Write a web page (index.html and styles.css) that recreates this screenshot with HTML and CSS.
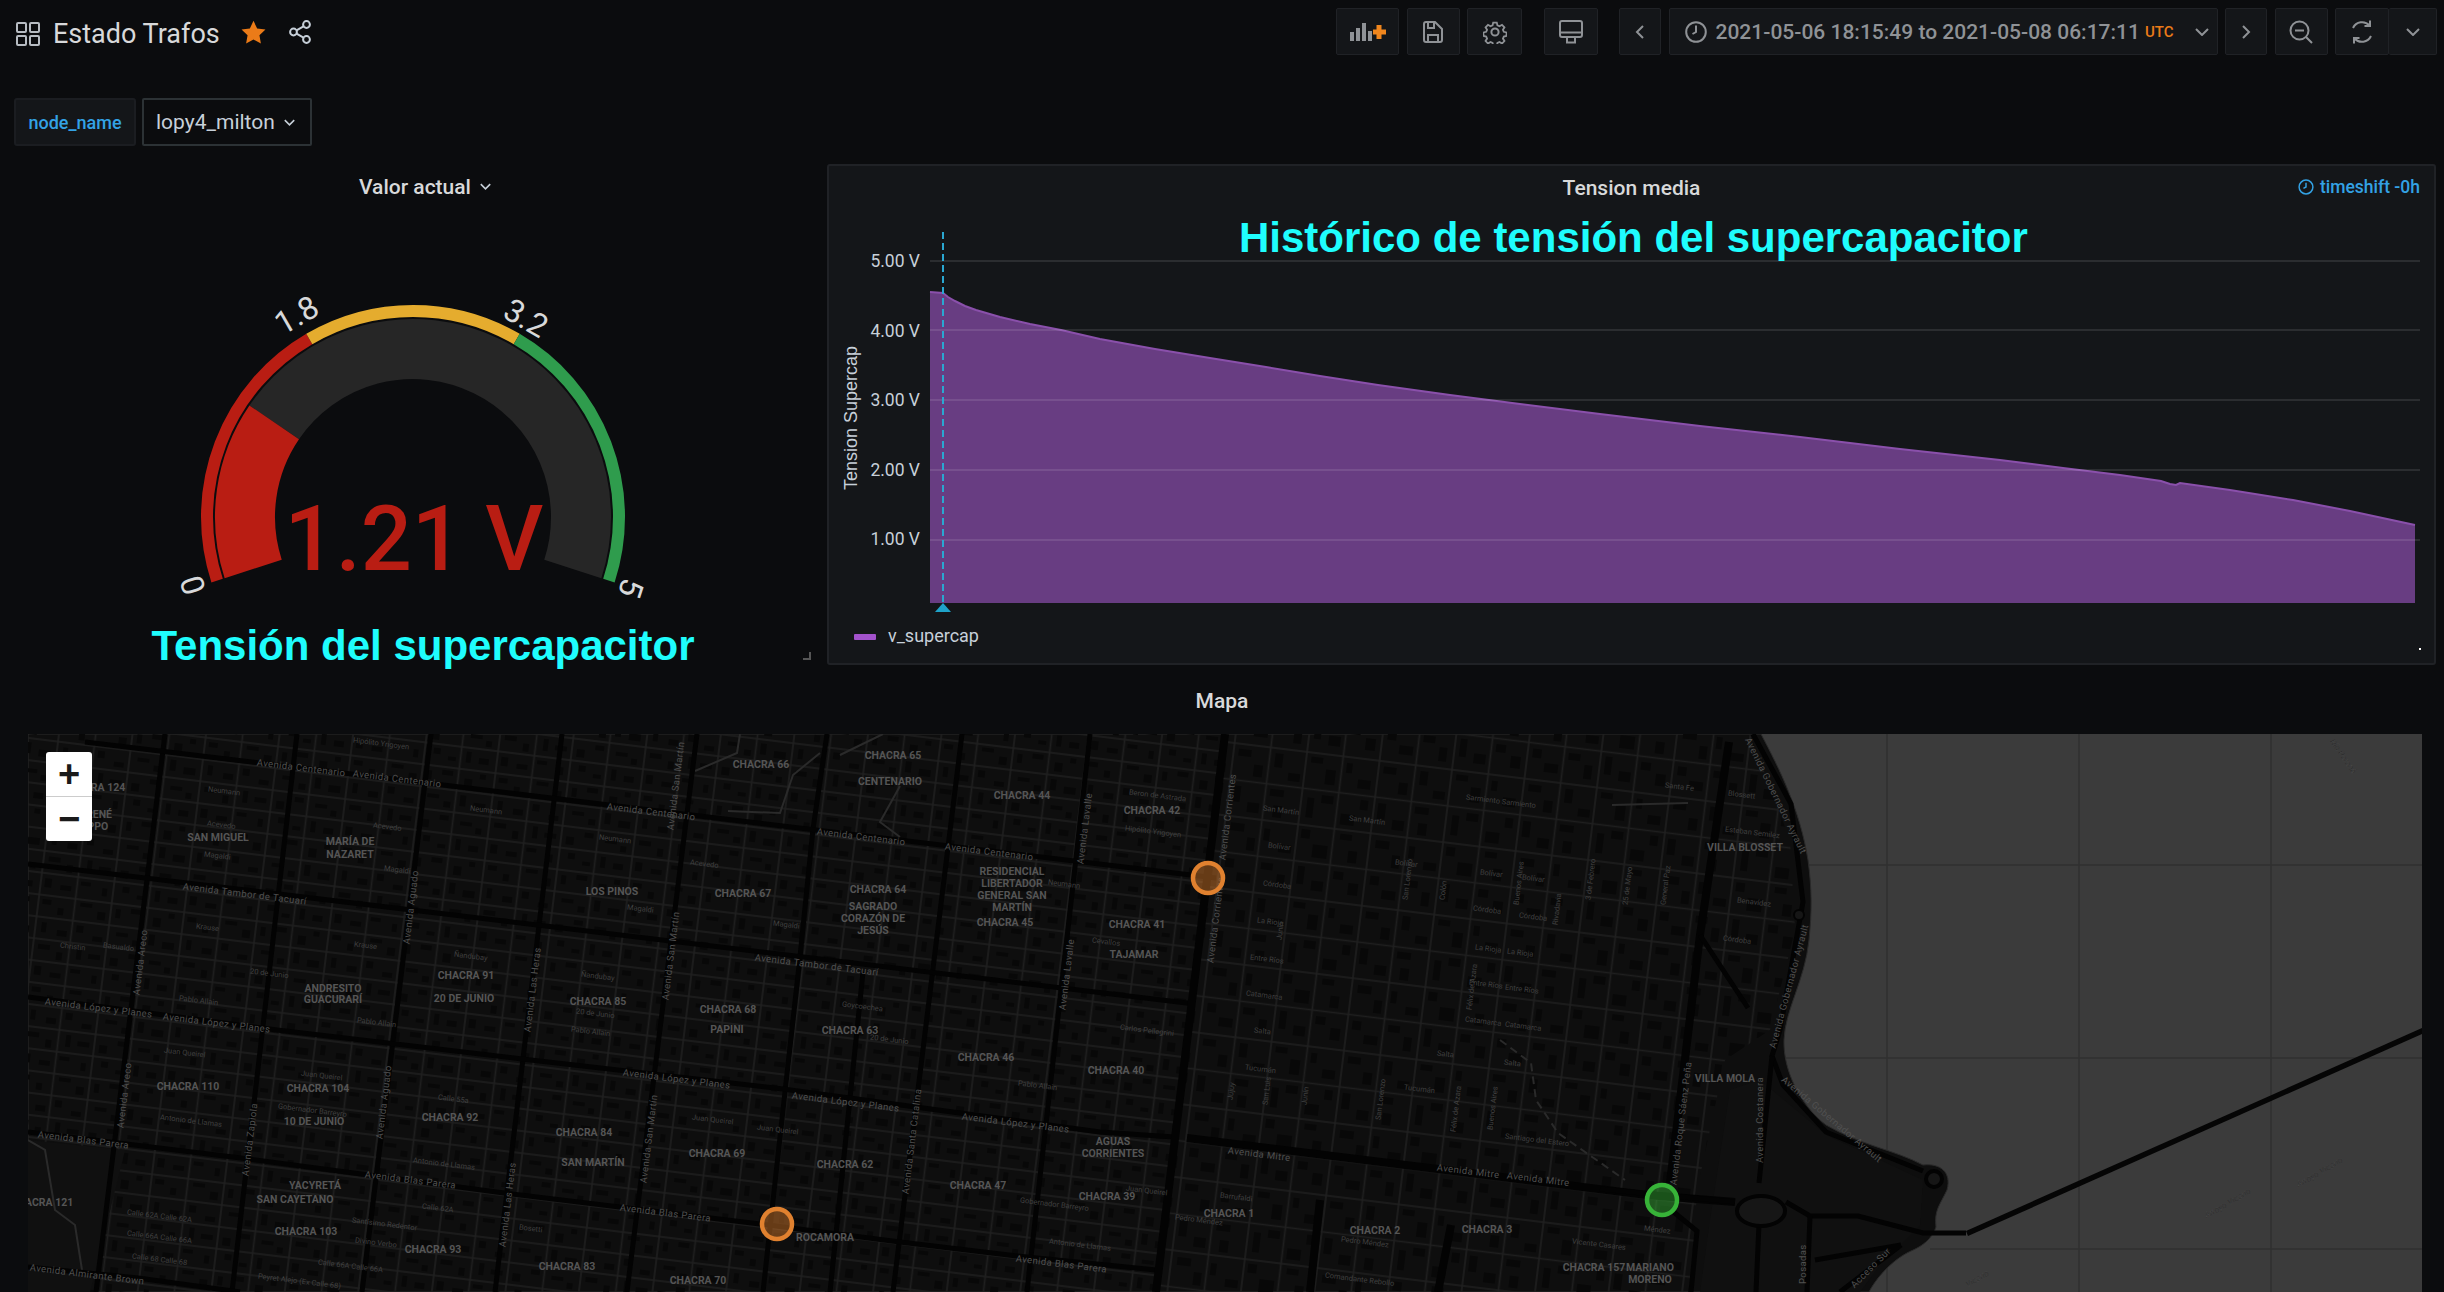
FILE: index.html
```html
<!DOCTYPE html>
<html lang="es">
  <head>
    <meta charset="UTF-8" />
    <title>Estado Trafos</title>
    <link rel="stylesheet" href="styles.css">
  </head>
  <body>
    <header class="topbar">
      <div class="dash-title">
        <svg class="ico-apps" viewBox="0 0 24 24"><rect x="1" y="1" width="9" height="9" rx="1"/><rect x="14" y="1" width="9" height="9" rx="1"/><rect x="1" y="14" width="9" height="9" rx="1"/><rect x="14" y="14" width="9" height="9" rx="1"/></svg>
        <h1>Estado Trafos</h1>
        <svg class="ico-star" viewBox="0 0 24 24"><path d="M12 .8l3.5 7.3 8 1.1-5.8 5.5 1.4 7.9-7.1-3.8-7.1 3.8 1.4-7.9L.5 9.2l8-1.1z"/></svg>
        <svg class="ico-share" viewBox="0 0 22 24"><circle cx="17.5" cy="4.5" r="3.4"/><circle cx="4.5" cy="12" r="3.4"/><circle cx="17.5" cy="19.5" r="3.4"/><path d="M7.5 10.3l7-4M7.5 13.7l7 4"/></svg>
      </div>
      <div class="toolbar">
        <button class="btn w63"><svg width="36" height="18" viewBox="0 0 36 18"><path class="solid" d="M0 9h4v9H0zM6 5h4v13H6zM12 0h4v18h-4zM18 8h4v10h-4z"/><path class="plus" d="M29 2v14M23 9h13"/></svg></button>
        <button class="btn w53"><svg width="20" height="22" viewBox="0 0 20 22"><path d="M3 1h9l7 7v11a2 2 0 0 1-2 2H3a2 2 0 0 1-2-2V3a2 2 0 0 1 2-2z"/><path d="M5 1v6h6V1M5 21v-7h10v7"/></svg></button>
        <button class="btn w55"><svg width="24" height="24" viewBox="0 0 24 24"><circle cx="12" cy="12" r="3.6"/><path d="M10 1.500h4l.7 3.200 2.300 1 2.800-1.700 2.700 2.800-1.700 2.700 1 2.300 3 .7v3.800l-3 .7-1 2.300 1.700 2.700-2.700 2.800-2.800-1.700-2.300 1-.7 3h-4l-.7-3-2.300-1-2.800 1.700-2.700-2.800 1.700-2.700-1-2.300-3-.7v-3.800l3-.7 1-2.300-1.700-2.700 2.700-2.800 2.800 1.700 2.300-1z" transform="translate(1.200 1.200) scale(.9)"/></svg></button>
        <button class="btn w54 gap-left"><svg width="24" height="24" viewBox="0 0 24 24"><rect x="1" y="1" width="22" height="16" rx="2"/><path d="M1 12.500h22M8 17v5.500h8V17"/></svg></button>
        <button class="btn w42 gap-left"><svg width="10" height="14" viewBox="0 0 10 14"><path d="M8 1L2 7l6 6"/></svg></button>
        <button class="btn time-range">
          <svg width="22" height="22" viewBox="0 0 22 22"><circle cx="11" cy="11" r="9.800"/><path d="M11 4.500V11l-3.500 2"/></svg>
          <span class="time-text">2021-05-06 18:15:49 to 2021-05-08 06:17:11</span>
          <span class="utc">UTC</span>
          <svg class="caret" width="14" height="8" viewBox="0 0 14 8"><path d="M1 1l6 6 6-6"/></svg>
        </button>
        <button class="btn w42"><svg width="10" height="14" viewBox="0 0 10 14"><path d="M2 1l6 6-6 6"/></svg></button>
        <button class="btn w53"><svg width="24" height="24" viewBox="0 0 24 24"><circle cx="10.500" cy="10.500" r="9"/><path d="M6 10.500h9M17 17l6 6"/></svg></button>
        <div class="btn-pair">
          <button class="btn w54"><svg width="24" height="26" viewBox="0 0 24 26"><path d="M19.500 6.500A10 10 0 0 0 3 9M4.500 19.500A10 10 0 0 0 21 17M20 1.500v5.500h-5.500M4 24.500V19h5.500"/></svg></button>
          <button class="btn w48"><svg width="14" height="8" viewBox="0 0 14 8"><path d="M1 1l6 6 6-6"/></svg></button>
        </div>
      </div>
    </header>

    <section class="var-row">
      <span class="var-label">node_name</span>
      <span class="var-select">lopy4_milton <svg width="11" height="7" viewBox="0 0 14 8"><path d="M1 1l6 6 6-6"/></svg></span>
    </section>

    <section class="panels">
      <article class="panel-gauge">
        <h2 class="panel-title">Valor actual <svg width="11" height="7" viewBox="0 0 14 8"><path d="M1 1l6 6 6-6"/></svg></h2>
        <svg class="gauge" viewBox="28 209 780 414">
          <path class="band" stroke="#b91d13" d="M217.100 580.700A206 206 0 0 1 309.300 339"/>
          <path class="band" stroke="#e5ac2e" d="M309.300 339A206 206 0 0 1 516.700 339"/>
          <path class="band" stroke="#2f9c4d" d="M516.700 339A206 206 0 0 1 608.900 580.700"/>
          <path class="val" stroke="#262626" d="M274.200 422.400A168 168 0 0 1 572.800 568.900"/>
          <path class="val" stroke="#b91d13" d="M253.200 568.900A168 168 0 0 1 274.200 422.400"/>
          <text class="tick" transform="translate(193 585) rotate(-108)">0</text>
          <text class="tick" transform="translate(296.500 315) rotate(-30)">1.8</text>
          <text class="tick" transform="translate(526 318) rotate(30)">3.2</text>
          <text class="tick" transform="translate(631 588) rotate(108)">5</text>
          <text class="gauge-value" x="414" y="570">1.21 V</text>
        </svg>
        <p class="note note-gauge">Tensión del supercapacitor</p>
        <span class="resize-handle"></span>
      </article>

      <article class="panel-graph">
        <h2 class="panel-title">Tension media</h2>
        <span class="timeshift"><svg width="16" height="16" viewBox="0 0 22 22"><circle cx="11" cy="11" r="9.500"/><path d="M11 5v6l-3.500 2"/></svg> timeshift -0h</span>
        <p class="note note-graph">Histórico de tensión del supercapacitor</p>
        <svg class="plot" viewBox="829 209 1605 411">
          <polygon class="area" points="930,603 930,292 943,293 948,297 955,301 965,306 976,310 1000,317 1030,324 1061,330 1100,339 1155,349 1210,358 1266,367 1320,376 1378,385 1450,395 1520,404 1600,414 1700,426 1800,437 1900,449 2000,460 2063,468 2120,475 2161,481 2170,484 2176,485 2180,483 2230,490 2293,500 2350,511 2415,525 2415,603"/>
          <polyline class="area-line" points="930,292 943,293 948,297 955,301 965,306 976,310 1000,317 1030,324 1061,330 1100,339 1155,349 1210,358 1266,367 1320,376 1378,385 1450,395 1520,404 1600,414 1700,426 1800,437 1900,449 2000,460 2063,468 2120,475 2161,481 2170,484 2176,485 2180,483 2230,490 2293,500 2350,511 2415,525"/>
          <path class="grid" d="M930 261H2420M930 330H2420M930 400H2420M930 470H2420M930 540H2420"/>
          <path class="marker" d="M943 232V603"/>
          <polygon class="marker-tip" points="943,603 935,612 951,612"/>
          <text class="ylab" x="920" y="261">5.00 V</text>
          <text class="ylab" x="920" y="331">4.00 V</text>
          <text class="ylab" x="920" y="400">3.00 V</text>
          <text class="ylab" x="920" y="470">2.00 V</text>
          <text class="ylab" x="920" y="539">1.00 V</text>
          <text class="yaxis" transform="translate(851 418) rotate(-90)">Tension Supercap</text>
        </svg>
        <div class="legend"><i class="legend-swatch"></i>v_supercap</div>
        <i class="dot"></i>
      </article>
    </section>

    <h2 class="panel-title map-title">Mapa</h2>
    <section class="map">
      <svg class="map-svg" viewBox="28 734 2394 558" preserveAspectRatio="xMinYMin slice">
        <defs>
          <pattern id="blocks-west" patternUnits="userSpaceOnUse" width="146" height="88" patternTransform="rotate(7)">
            <path class="tile-st" d="M2 0V88M38.500 0V88M75 0V88M111.500 0V88M0 3H146M0 25H146M0 47H146M0 69H146"/>
            <g class="tile-bd">
              <rect x="6" y="7" width="9" height="5"/><rect x="22" y="14" width="6" height="7"/><rect x="44" y="6" width="12" height="4"/><rect x="62" y="13" width="8" height="8"/>
              <rect x="80" y="8" width="5" height="9"/><rect x="95" y="6" width="11" height="5"/><rect x="118" y="12" width="8" height="9"/><rect x="133" y="6" width="6" height="5"/>
              <rect x="8" y="30" width="5" height="10"/><rect x="24" y="36" width="10" height="6"/><rect x="43" y="29" width="7" height="7"/><rect x="60" y="38" width="10" height="5"/>
              <rect x="83" y="31" width="12" height="4"/><rect x="100" y="37" width="7" height="6"/><rect x="116" y="29" width="6" height="11"/><rect x="130" y="35" width="12" height="7"/>
              <rect x="7" y="52" width="12" height="5"/><rect x="26" y="58" width="6" height="8"/><rect x="46" y="51" width="5" height="12"/><rect x="58" y="56" width="12" height="5"/>
              <rect x="80" y="57" width="8" height="8"/><rect x="98" y="51" width="9" height="5"/><rect x="119" y="55" width="12" height="4"/><rect x="135" y="60" width="6" height="6"/>
              <rect x="6" y="74" width="7" height="9"/><rect x="22" y="79" width="11" height="5"/><rect x="42" y="73" width="10" height="4"/><rect x="64" y="77" width="5" height="8"/>
              <rect x="84" y="73" width="7" height="6"/><rect x="99" y="80" width="8" height="4"/><rect x="117" y="73" width="5" height="11"/><rect x="130" y="78" width="10" height="6"/>
            </g>
          </pattern>
          <pattern id="blocks-east" patternUnits="userSpaceOnUse" width="146" height="146" patternTransform="rotate(7)">
            <path class="tile-st" d="M2 0V146M38.500 0V146M75 0V146M111.500 0V146M0 3H146M0 39.500H146M0 76H146M0 112.500H146"/>
            <g class="tile-bd">
              <rect x="7" y="8" width="13" height="7"/><rect x="24" y="22" width="9" height="12"/><rect x="44" y="8" width="8" height="14"/><rect x="59" y="26" width="12" height="8"/>
              <rect x="80" y="7" width="12" height="6"/><rect x="96" y="18" width="10" height="15"/><rect x="116" y="9" width="6" height="10"/><rect x="129" y="24" width="13" height="9"/>
              <rect x="6" y="45" width="8" height="16"/><rect x="22" y="60" width="12" height="10"/><rect x="43" y="44" width="14" height="7"/><rect x="48" y="60" width="9" height="12"/>
              <rect x="81" y="48" width="7" height="20"/><rect x="95" y="44" width="12" height="8"/><rect x="116" y="60" width="14" height="11"/><rect x="134" y="44" width="8" height="10"/>
              <rect x="8" y="82" width="14" height="8"/><rect x="26" y="95" width="8" height="13"/><rect x="42" y="84" width="6" height="12"/><rect x="58" y="98" width="13" height="8"/>
              <rect x="79" y="80" width="9" height="9"/><rect x="92" y="94" width="15" height="13"/><rect x="118" y="80" width="12" height="6"/><rect x="128" y="96" width="9" height="12"/>
              <rect x="7" y="118" width="9" height="9"/><rect x="20" y="131" width="14" height="9"/><rect x="43" y="118" width="12" height="7"/><rect x="60" y="128" width="8" height="14"/>
              <rect x="80" y="117" width="7" height="18"/><rect x="95" y="130" width="12" height="10"/><rect x="116" y="118" width="10" height="8"/><rect x="132" y="128" width="10" height="12"/>
            </g>
          </pattern>
        </defs>

        <!-- rio -->
        <rect class="water" x="28" y="734" width="2394" height="558"/>
        <path class="water-grid" d="M1887 734V1292M2079 734V1292M2271 734V1292M1804 865H2422M1786 1058H2422M1930 1249H2422"/>
        <polygon class="road-major" points="1966,1231 2422,1028 2422,1034 1968,1236"/>

        <!-- tierra -->
        <path class="land" d="M28 734H1761C1780 770 1800 810 1808 860C1812 890 1812 910 1809 940C1805 980 1785 1010 1784 1040C1783 1070 1800 1105 1826 1125C1860 1145 1895 1150 1923 1165C1940 1163 1952 1172 1947 1190C1940 1205 1934 1210 1936 1227C1930 1245 1912 1250 1907 1253C1890 1262 1875 1280 1869 1292H28Z"/>
        <polygon fill="url(#blocks-west)" points="28,734 1225,734 1156,1292 28,1292"/>
        <polygon fill="url(#blocks-east)" points="1225,734 1750,734 1790,840 1795,930 1770,1030 1725,1060 1697,1190 1691,1292 1156,1292"/>
        <polygon class="park" points="28,1140 125,1150 90,1292 28,1292"/>
        <polygon class="park" points="1760,1080 1826,1135 1923,1180 1920,1225 1880,1265 1860,1292 1700,1292 1710,1220 1730,1090"/>
        <path class="road-pale" d="M28 1140L45 1150L55 1210L75 1225L82 1270M695 771L737 753L740 734M728 811L780 813L793 775L820 753M840 755L883 734M900 786L880 822L900 837M1612 805L1688 803"/>
        <path class="road-pale dashed" d="M1500 1040L1531 1063L1536 1100L1558 1133L1625 1180"/>

        <!-- avenidas -->
        <g class="road-major">
          <path d="M165 734L96 1292M297 734L232 1292M431 734L362 1292M562 734L495 1292M697 734L627 1292"/>
          <path d="M827 734L813 829L800 957L785 1092L763 1292M863 972L830 1292M962 734L893 1292M1090 734L1027 1292"/>
          <path d="M85 742L1216 878M28 864L1195 1004M28 997L277 1030L522 1059L783 1089L1100 1132L1174 1137"/>
          <path d="M28 1132L241 1158L504 1193L760 1224L900 1242L1017 1256L1156 1270M28 1267L138 1278L240 1292"/>
        </g>
        <g class="road-wide">
          <path d="M1225 734L1156 1292"/>
          <path d="M1187 1138L1446 1170L1647 1195L1735 1202"/>
          <path d="M1729 742L1700 935L1670 1183"/>
          <path d="M1451 1225L1438 1292M1320 1200L1310 1292"/>
        </g>
        <g class="road-coast">
          <path d="M1753 734L1791 804L1803 902L1780 1030L1772 1056L1783 1085L1826 1132L1923 1171"/>
          <path d="M1700 935L1748 1008M1772 1056L1759 1183M1670 1209L1697 1231L1691 1292M1786 1202L1810 1216L1858 1216L1923 1233L1966 1233"/>
          <path d="M1810 1216L1807 1292M1759 1224L1756 1292M1815 1260L1901 1245M1840 1292L1901 1245"/>
          <path d="M1600 1189L1735 1202"/>
        </g>
        <ellipse class="road-ring" cx="1761" cy="1211" rx="24" ry="15"/>
        <circle class="road-ring" cx="1934" cy="1179" r="8"/>
        <circle class="road-ring thin" cx="1799" cy="915" r="5"/>

        <!-- barrios -->
        <g class="dist">
          <text x="94" y="787">CHACRA 124</text><text x="99" y="814">RENÉ</text><text x="89" y="826">FILIPPO</text>
          <text x="218" y="837">SAN MIGUEL</text><text x="350" y="841">MARÍA DE</text><text x="350" y="854">NAZARET</text><text x="612" y="891">LOS PINOS</text>
          <text x="466" y="975">CHACRA 91</text><text x="464" y="998">20 DE JUNIO</text><text x="333" y="988">ANDRESITO</text><text x="333" y="999">GUACURARÍ</text><text x="598" y="1001">CHACRA 85</text>
          <text x="188" y="1086">CHACRA 110</text><text x="318" y="1088">CHACRA 104</text><text x="314" y="1121">10 DE JUNIO</text><text x="450" y="1117">CHACRA 92</text><text x="584" y="1132">CHACRA 84</text><text x="593" y="1162">SAN MARTÍN</text>
          <text x="315" y="1185">YACYRETÁ</text><text x="295" y="1199">SAN CAYETANO</text><text x="42" y="1202">CHACRA 121</text><text x="306" y="1231">CHACRA 103</text><text x="433" y="1249">CHACRA 93</text><text x="567" y="1266">CHACRA 83</text><text x="698" y="1280">CHACRA 70</text>
          <text x="761" y="764">CHACRA 66</text><text x="893" y="755">CHACRA 65</text><text x="890" y="781">CENTENARIO</text><text x="1022" y="795">CHACRA 44</text><text x="743" y="893">CHACRA 67</text><text x="878" y="889">CHACRA 64</text>
          <text x="873" y="906">SAGRADO</text><text x="873" y="918">CORAZÓN DE</text><text x="873" y="930">JESÚS</text>
          <text x="1012" y="871">RESIDENCIAL</text><text x="1012" y="883">LIBERTADOR</text><text x="1012" y="895">GENERAL SAN</text><text x="1012" y="907">MARTÍN</text><text x="1005" y="922">CHACRA 45</text>
          <text x="728" y="1009">CHACRA 68</text><text x="727" y="1029">PAPINI</text><text x="850" y="1030">CHACRA 63</text><text x="986" y="1057">CHACRA 46</text><text x="717" y="1153">CHACRA 69</text><text x="845" y="1164">CHACRA 62</text><text x="978" y="1185">CHACRA 47</text><text x="825" y="1237">ROCAMORA</text>
          <text x="1152" y="810">CHACRA 42</text><text x="1137" y="924">CHACRA 41</text><text x="1134" y="954">TAJAMAR</text><text x="1116" y="1070">CHACRA 40</text><text x="1113" y="1141">AGUAS</text><text x="1113" y="1153">CORRIENTES</text><text x="1107" y="1196">CHACRA 39</text>
          <text x="1229" y="1213">CHACRA 1</text><text x="1375" y="1230">CHACRA 2</text><text x="1487" y="1229">CHACRA 3</text><text x="1594" y="1267">CHACRA 157</text><text x="1650" y="1267">MARIANO</text><text x="1650" y="1279">MORENO</text>
          <text x="1745" y="847">VILLA BLOSSET</text><text x="1725" y="1078">VILLA MOLA</text>
        </g>

        <!-- avenidas, nombres -->
        <g class="ave">
          <text transform="translate(257 762) rotate(7)">Avenida Centenario</text><text transform="translate(353 773) rotate(7)">Avenida Centenario</text><text transform="translate(607 806) rotate(7)">Avenida Centenario</text><text transform="translate(817 831) rotate(7)">Avenida Centenario</text><text transform="translate(945 846) rotate(7)">Avenida Centenario</text>
          <text transform="translate(183 886) rotate(7)">Avenida Tambor de Tacuarí</text><text transform="translate(755 957) rotate(7)">Avenida Tambor de Tacuarí</text>
          <text transform="translate(45 1001) rotate(7)">Avenida López y Planes</text><text transform="translate(163 1016) rotate(7)">Avenida López y Planes</text><text transform="translate(623 1072) rotate(7)">Avenida López y Planes</text><text transform="translate(792 1095) rotate(7)">Avenida López y Planes</text><text transform="translate(962 1116) rotate(7)">Avenida López y Planes</text>
          <text transform="translate(38 1134) rotate(7)">Avenida Blas Parera</text><text transform="translate(365 1174) rotate(7)">Avenida Blas Parera</text><text transform="translate(620 1207) rotate(7)">Avenida Blas Parera</text><text transform="translate(1016 1258) rotate(7)">Avenida Blas Parera</text>
          <text transform="translate(30 1267) rotate(7)">Avenida Almirante Brown</text>
          <text transform="translate(1228 1150) rotate(7)">Avenida Mitre</text><text transform="translate(1437 1167) rotate(7)">Avenida Mitre</text><text transform="translate(1507 1175) rotate(7)">Avenida Mitre</text>
          <text transform="translate(136 995) rotate(-83)">Avenida Areco</text><text transform="translate(120 1128) rotate(-83)">Avenida Areco</text>
          <text transform="translate(406 944) rotate(-83)">Avenida Aguado</text><text transform="translate(379 1139) rotate(-83)">Avenida Aguado</text>
          <text transform="translate(245 1176) rotate(-83)">Avenida Zapiola</text>
          <text transform="translate(527 1032) rotate(-83)">Avenida Las Heras</text><text transform="translate(502 1247) rotate(-83)">Avenida Las Heras</text>
          <text transform="translate(665 1000) rotate(-83)">Avenida San Martín</text><text transform="translate(643 1183) rotate(-83)">Avenida San Martín</text><text transform="translate(670 830) rotate(-83)">Avenida San Martín</text>
          <text transform="translate(905 1194) rotate(-83)">Avenida Santa Catalina</text>
          <text transform="translate(1080 864) rotate(-83)">Avenida Lavalle</text><text transform="translate(1062 1010) rotate(-83)">Avenida Lavalle</text>
          <text transform="translate(1210 963) rotate(-83)">Avenida Corrientes</text><text transform="translate(1222 860) rotate(-83)">Avenida Corrientes</text>
          <text transform="translate(1673 1185) rotate(-83)">Avenida Roque Sáenz Peña</text>
          <text transform="translate(1748 738) rotate(64)">Avenida Gobernador Ayrault</text>
          <text transform="translate(1772 1048) rotate(-75)">Avenida Gobernador Ayrault</text>
          <text transform="translate(1783 1078) rotate(40)">Avenida Gobernador Ayrault</text>
          <text transform="translate(1759 1163) rotate(-90)">Avenida Costanera</text>
          <text transform="translate(1802 1284) rotate(-90)">Posadas</text>
          <text transform="translate(1852 1286) rotate(-45)">Acceso Sur</text>
        </g>

        <!-- calles, nombres -->
        <g class="st">
          <text transform="translate(208 789) rotate(7)">Neumann</text><text transform="translate(207 823) rotate(7)">Acevedo</text><text transform="translate(204 854) rotate(7)">Magaldi</text><text transform="translate(196 926) rotate(7)">Krause</text><text transform="translate(250 971) rotate(7)">20 de Junio</text><text transform="translate(179 998) rotate(7)">Pablo Allain</text>
          <text transform="translate(164 1050) rotate(7)">Juan Queirel</text><text transform="translate(160 1117) rotate(7)">Antonio de Llamas</text><text transform="translate(470 808) rotate(7)">Neumann</text><text transform="translate(373 825) rotate(7)">Acevedo</text><text transform="translate(384 868) rotate(7)">Magaldi</text><text transform="translate(354 944) rotate(7)">Krause</text>
          <text transform="translate(454 954) rotate(7)">Ñandubay</text><text transform="translate(357 1020) rotate(7)">Pablo Allain</text><text transform="translate(301 1073) rotate(7)">Juan Queirel</text><text transform="translate(278 1106) rotate(7)">Gobernador Barreyro</text><text transform="translate(438 1097) rotate(7)">Calle 55a</text><text transform="translate(413 1160) rotate(7)">Antonio de Llamas</text>
          <text transform="translate(422 1206) rotate(7)">Calle 62A</text><text transform="translate(352 1220) rotate(7)">Santísimo Redentor</text><text transform="translate(355 1240) rotate(7)">Divino Verbo</text><text transform="translate(519 1227) rotate(7)">Bosetti</text><text transform="translate(599 837) rotate(7)">Neumann</text><text transform="translate(627 907) rotate(7)">Magaldi</text>
          <text transform="translate(581 974) rotate(7)">Ñandubay</text><text transform="translate(576 1011) rotate(7)">20 de Junio</text><text transform="translate(571 1029) rotate(7)">Pablo Allain</text><text transform="translate(353 740) rotate(7)">Hipólito Yrigoyen</text><text transform="translate(103 945) rotate(7)">Basualdo</text><text transform="translate(60 945) rotate(7)">Christin</text>
          <text transform="translate(127 1212) rotate(7)">Calle 62A Calle 62A</text><text transform="translate(127 1233) rotate(7)">Calle 66A Calle 66A</text><text transform="translate(132 1256) rotate(7)">Calle 68 Calle 68</text><text transform="translate(318 1262) rotate(7)">Calle 66A Calle 66A</text><text transform="translate(258 1276) rotate(7)">Peyret Alejo (Ex Calle 68)</text>
          <text transform="translate(690 862) rotate(7)">Acevedo</text><text transform="translate(773 923) rotate(7)">Magaldi</text><text transform="translate(842 1004) rotate(7)">Goycoechea</text><text transform="translate(870 1037) rotate(7)">20 de Junio</text><text transform="translate(1018 1083) rotate(7)">Pablo Allain</text><text transform="translate(692 1117) rotate(7)">Juan Queirel</text><text transform="translate(757 1127) rotate(7)">Juan Queirel</text>
          <text transform="translate(1263 883) rotate(7)">Córdoba</text><text transform="translate(1257 920) rotate(7)">La Rioja</text><text transform="translate(1250 957) rotate(7)">Entre Ríos</text><text transform="translate(1246 993) rotate(7)">Catamarca</text><text transform="translate(1254 1030) rotate(7)">Salta</text><text transform="translate(1245 1067) rotate(7)">Tucumán</text>
          <text transform="translate(1268 845) rotate(7)">Bolívar</text><text transform="translate(1263 808) rotate(7)">San Martín</text><text transform="translate(1349 818) rotate(7)">San Martín</text><text transform="translate(1466 797) rotate(7)">Sarmiento Sarmiento</text><text transform="translate(1395 862) rotate(7)">Bolívar</text><text transform="translate(1480 872) rotate(7)">Bolívar</text><text transform="translate(1522 877) rotate(7)">Bolívar</text>
          <text transform="translate(1473 908) rotate(7)">Córdoba</text><text transform="translate(1519 915) rotate(7)">Córdoba</text><text transform="translate(1475 947) rotate(7)">La Rioja</text><text transform="translate(1507 951) rotate(7)">La Rioja</text><text transform="translate(1469 982) rotate(7)">Entre Ríos</text><text transform="translate(1505 987) rotate(7)">Entre Ríos</text>
          <text transform="translate(1465 1019) rotate(7)">Catamarca</text><text transform="translate(1505 1024) rotate(7)">Catamarca</text><text transform="translate(1437 1053) rotate(7)">Salta</text><text transform="translate(1504 1062) rotate(7)">Salta</text><text transform="translate(1404 1087) rotate(7)">Tucumán</text><text transform="translate(1505 1136) rotate(7)">Santiago del Estero</text>
          <text transform="translate(1120 1027) rotate(7)">Carlos Pellegrini</text><text transform="translate(1126 1188) rotate(7)">Juan Queirel</text><text transform="translate(1220 1195) rotate(7)">Barrufaldi</text><text transform="translate(1175 1217) rotate(7)">Pedro Méndez</text><text transform="translate(1341 1239) rotate(7)">Pedro Méndez</text><text transform="translate(1049 1241) rotate(7)">Antonio de Llamas</text>
          <text transform="translate(1572 1241) rotate(7)">Vicente Casares</text><text transform="translate(1644 1228) rotate(7)">Méndez</text><text transform="translate(1325 1275) rotate(7)">Comandante Rebollo</text><text transform="translate(1020 1200) rotate(7)">Gobernador Barreyro</text><text transform="translate(1125 828) rotate(7)">Hipólito Yrigoyen</text><text transform="translate(1048 882) rotate(7)">Neumann</text><text transform="translate(1092 940) rotate(7)">Cevallos</text><text transform="translate(1129 792) rotate(7)">Beron de Astrada</text>
          <text transform="translate(1725 829) rotate(7)">Esteban Semilez</text><text transform="translate(1737 900) rotate(7)">Benavídez</text><text transform="translate(1723 938) rotate(7)">Córdoba</text><text transform="translate(1665 785) rotate(7)">Santa Fe</text><text transform="translate(1728 793) rotate(7)">Blossett</text>
          <text transform="translate(1279 940) rotate(-83)">Junín</text><text transform="translate(1405 900) rotate(-83)">San Lorenzo</text><text transform="translate(1442 900) rotate(-83)">Colón</text><text transform="translate(1469 1010) rotate(-83)">Félix de Azara</text><text transform="translate(1516 905) rotate(-83)">Buenos Aires</text><text transform="translate(1555 925) rotate(-83)">Rivadavia</text><text transform="translate(1588 900) rotate(-83)">3 de Febrero</text><text transform="translate(1625 905) rotate(-83)">25 de Mayo</text><text transform="translate(1663 905) rotate(-83)">General Paz</text>
          <text transform="translate(1230 1100) rotate(-83)">Jujuy</text><text transform="translate(1265 1105) rotate(-83)">San Luis</text><text transform="translate(1304 1105) rotate(-83)">Junín</text><text transform="translate(1378 1120) rotate(-83)">San Lorenzo</text><text transform="translate(1453 1132) rotate(-83)">Félix de Azara</text><text transform="translate(1490 1130) rotate(-83)">Buenos Aires</text>
        </g>

        <g class="river-label">
          <text transform="translate(2205 1216) rotate(-30)">Arroyo Vicario</text>
          <text transform="translate(2297 1185) rotate(-30)">Arroyo Vicario</text>
          <text transform="translate(1966 1285) rotate(-30)">Vicario</text>
          <text transform="translate(2332 740) rotate(55)">Río Paraná</text>
        </g>

        <circle class="pin pin-orange" cx="1208" cy="878" r="15"/>
        <circle class="pin pin-orange" cx="777" cy="1224" r="15"/>
        <circle class="pin pin-green" cx="1662" cy="1200" r="15"/>
      </svg>
      <div class="zoom-ctrl">
        <span class="zoom-btn">+</span>
        <span class="zoom-btn">−</span>
      </div>
    </section>
  </body>
</html>
```

FILE: styles.css
```css
* {
  box-sizing: border-box;
}

body {
  margin: 0;
  height: 100vh;
  overflow: hidden;
  display: flex;
  flex-direction: column;
  background: #0b0c0e;
  color: #d8d9da;
  font-family: Roboto, "Liberation Sans", sans-serif;
}

/* top bar */
.topbar {
  height: 98px;
  flex: none;
  display: flex;
  justify-content: space-between;
  align-items: flex-start;
  padding: 8px 7px 0 16px;
}

.dash-title {
  display: flex;
  align-items: center;
  height: 52px;
}

.dash-title h1 {
  margin: 0 0 0 13px;
  font-size: 27px;
  font-weight: 400;
  color: #d8d9da;
}

.ico-apps {
  width: 24px;
  height: 24px;
  fill: none;
  stroke: #b7bcc2;
  stroke-width: 2;
}

.ico-star {
  width: 25px;
  height: 25px;
  margin-left: 21px;
  margin-top: -3px;
  fill: #eb7b18;
}

.ico-share {
  width: 22px;
  height: 24px;
  margin-left: 23px;
  margin-top: -4px;
  fill: none;
  stroke: #c7d0d9;
  stroke-width: 2;
}

.toolbar {
  display: flex;
  gap: 7.500px;
}

.btn {
  height: 47px;
  padding: 0;
  display: flex;
  align-items: center;
  justify-content: center;
  background: #141619;
  border: 1px solid #202226;
  border-radius: 2px;
  font-family: inherit;
}

.btn svg {
  fill: none;
  stroke: #8f9296;
  stroke-width: 2;
}

.btn svg .solid {
  fill: #8f9296;
  stroke: none;
}

.btn svg .plus {
  stroke: #f0861d;
  stroke-width: 5;
}

.w42 {
  width: 42px;
}

.w48 {
  width: 48px;
}

.w53 {
  width: 53px;
}

.w54 {
  width: 54px;
}

.w55 {
  width: 55px;
}

.w63 {
  width: 63px;
}

.gap-left {
  margin-left: 14px;
}

.time-range {
  width: 549px;
  justify-content: flex-start;
  padding-left: 15px;
}

.time-text {
  margin-left: 9px;
  font-size: 21px;
  font-weight: 500;
  color: #8f9296;
}

.utc {
  margin-left: 5px;
  font-size: 15px;
  font-weight: 500;
  color: #eb7b18;
}

.time-range .caret {
  margin-left: 22px;
}

.btn-pair {
  display: flex;
}

.btn-pair .btn:last-child {
  border-left: 0;
}

/* variables */
.var-row {
  height: 66px;
  flex: none;
  display: flex;
  gap: 6px;
  padding-left: 14px;
  align-items: flex-start;
}

.var-label {
  width: 122px;
  height: 48px;
  display: flex;
  align-items: center;
  justify-content: center;
  background: #141619;
  border: 2px solid #1b1d21;
  border-radius: 3px;
  font-size: 18px;
  font-weight: 500;
  color: #33a2e5;
}

.var-select {
  width: 170px;
  height: 48px;
  display: flex;
  align-items: center;
  gap: 9px;
  padding-left: 12px;
  background: #0b0c0e;
  border: 2px solid #2c3235;
  border-radius: 2px;
  font-size: 21px;
  color: #c7d0d9;
}

.var-select svg,
.panel-title svg {
  fill: none;
  stroke: #c7d0d9;
  stroke-width: 2;
}

/* panels */
.panels {
  height: 501px;
  flex: none;
  display: grid;
  grid-template-columns: 780px 1609px;
  grid-template-rows: 501px;
  gap: 19px;
  padding-left: 28px;
}

.panel-gauge,
.panel-graph {
  position: relative;
}

.panel-graph {
  background: #141619;
  border: 2px solid #202226;
  border-radius: 3px;
}

.panel-title {
  height: 45px;
  margin: 0;
  display: flex;
  align-items: center;
  justify-content: center;
  gap: 9px;
  font-size: 21px;
  font-weight: 500;
  color: #d8d9da;
}

.panel-graph .panel-title {
  height: 43px;
}

.panel-gauge .panel-title {
  padding-left: 14px;
}

.gauge,
.plot {
  display: block;
  width: 100%;
}

.gauge {
  height: 414px;
}

.plot {
  height: 411px;
}

.band,
.val {
  fill: none;
}

.band {
  stroke-width: 12;
}

.val {
  stroke-width: 60;
}

.tick {
  font-size: 32px;
  fill: #d8d9da;
  text-anchor: middle;
  dominant-baseline: central;
}

.gauge-value {
  font-size: 90px;
  font-weight: 500;
  fill: #b91d13;
  text-anchor: middle;
}

.note {
  margin: 0;
  font-family: "Liberation Sans", Arial, sans-serif;
  font-weight: 700;
  font-size: 42px;
  line-height: 46px;
  color: #1ffdfd;
  white-space: nowrap;
}

.note-gauge {
  padding-left: 10px;
  text-align: center;
}

.note-graph {
  position: absolute;
  left: 410px;
  top: 49px;
}

.resize-handle {
  position: absolute;
  right: -3px;
  bottom: 5px;
  width: 8px;
  height: 8px;
  border-right: 2px solid #555;
  border-bottom: 2px solid #555;
}

.timeshift {
  position: absolute;
  right: 14px;
  top: 11px;
  display: flex;
  align-items: center;
  gap: 6px;
  font-size: 17.500px;
  font-weight: 500;
  color: #33a2e5;
}

.timeshift svg {
  fill: none;
  stroke: #33a2e5;
  stroke-width: 2;
}

.area {
  fill: #683d82;
}

.area-line {
  fill: none;
  stroke: #8a50ab;
  stroke-width: 2;
}

.grid {
  stroke: rgba(255, 255, 255, 0.1);
  stroke-width: 2;
}

.marker {
  stroke: #2aa7d1;
  stroke-width: 2;
  stroke-dasharray: 7 4;
}

.marker-tip {
  fill: #1fa3c9;
}

.ylab {
  font-size: 17.500px;
  fill: #c7d0d9;
  text-anchor: end;
  dominant-baseline: central;
}

.yaxis {
  font-family: "Liberation Sans", Arial, sans-serif;
  font-size: 18px;
  fill: #c7d0d9;
  text-anchor: middle;
  dominant-baseline: central;
}

.legend {
  display: flex;
  align-items: center;
  padding-left: 25px;
  height: 30px;
  font-size: 18px;
  color: #c7d0d9;
}

.legend-swatch {
  width: 22px;
  height: 6px;
  margin-right: 12px;
  margin-top: 3px;
  border-radius: 1px;
  background: #a352cc;
}

.dot {
  position: absolute;
  right: 13px;
  bottom: 13px;
  width: 2px;
  height: 2px;
  background: #fff;
}

/* map */
.map-title {
  height: 69px;
  padding-top: 3px;
  flex: none;
}

.map {
  position: relative;
  flex: 1;
  min-height: 0;
  margin: 0 22px 0 28px;
  overflow: hidden;
}

.map-svg {
  display: block;
  width: 100%;
  height: 100%;
}

.water {
  fill: #3b3b3b;
}

.water-grid {
  stroke: #303030;
  stroke-width: 1.500;
}

.land {
  fill: #0e0e0e;
  stroke: #2a2a2a;
  stroke-width: 1;
}

.park {
  fill: #101010;
}

.tile-st {
  fill: none;
  stroke: #1f1f1f;
  stroke-width: 1.600;
}

.tile-bd rect {
  fill: #080808;
}

.road-major,
.road-wide,
.road-coast {
  fill: none;
  stroke: #030303;
}

polygon.road-major {
  fill: #050505;
  stroke: none;
}

.road-major {
  stroke-width: 5;
}

.road-wide {
  stroke-width: 8;
}

.road-coast {
  stroke-width: 5;
}

.road-ring {
  fill: #161616;
  stroke: #030303;
  stroke-width: 4;
}

.road-ring.thin {
  stroke-width: 2;
}

.road-pale {
  fill: none;
  stroke: #2a2a2a;
  stroke-width: 2;
}

.road-pale.dashed {
  stroke-dasharray: 8 5;
}

.map-svg text {
  dominant-baseline: central;
}

.dist text {
  font-size: 10.500px;
  font-weight: 700;
  fill: #555;
  text-anchor: middle;
}

.ave text {
  font-size: 9.500px;
  letter-spacing: 0.4px;
  fill: #505050;
}

.st text {
  font-size: 7.500px;
  fill: #404040;
}

.river-label text {
  font-size: 8.500px;
  font-style: italic;
  fill: #1c1c1c;
  stroke: #4c4c4c;
  stroke-width: 0.300px;
}

.pin {
  stroke-width: 4.500;
}

.pin-orange {
  fill: rgba(224, 129, 47, 0.45);
  stroke: #e0812f;
}

.pin-green {
  fill: rgba(55, 179, 56, 0.45);
  stroke: #37b338;
}

.zoom-ctrl {
  position: absolute;
  left: 18px;
  top: 18px;
  width: 46px;
  display: flex;
  flex-direction: column;
  background: #fff;
  border-radius: 3px;
}

.zoom-btn {
  height: 44.500px;
  padding-top: 2px;
  display: flex;
  align-items: center;
  justify-content: center;
  font-family: "Liberation Sans", Arial, sans-serif;
  font-weight: 700;
  font-size: 38px;
  color: #1a1a1a;
}

.zoom-btn:first-child {
  border-bottom: 1px solid #ccc;
}
```
